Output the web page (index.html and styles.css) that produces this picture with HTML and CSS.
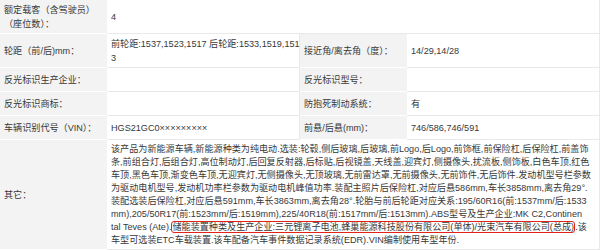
FILE: index.html
```html
<!DOCTYPE html>
<html lang="zh-CN">
<head>
<meta charset="utf-8">
<title>车辆参数</title>
<link rel="stylesheet" href="styles.css">
</head>
<body>
<table class="spec">
  <colgroup>
    <col class="col-label">
    <col class="col-value">
    <col class="col-label">
    <col class="col-value">
  </colgroup>
  <tr class="row-two">
    <th>额定载客（含驾驶员）（座位数）：</th>
    <td colspan="3">4</td>
  </tr>
  <tr class="row-two">
    <th>轮距（前/后)mm：</th>
    <td class="fixed-lines">前轮距:1537,1523,1517 后轮距:1533,1519,151<br>3</td>
    <th>接近角/离去角（度）：</th>
    <td>14/29,14/28</td>
  </tr>
  <tr class="row-one">
    <th>反光标识生产企业：</th>
    <td></td>
    <th>反光标识型号：</th>
    <td></td>
  </tr>
  <tr class="row-one">
    <th>反光标识商标：</th>
    <td></td>
    <th>防抱死制动系统：</th>
    <td>有</td>
  </tr>
  <tr class="row-one">
    <th>车辆识别代号（VIN）：</th>
    <td>HGS21GC0×××××××××</td>
    <th>前悬/后悬(mm)：</th>
    <td>746/586,746/591</td>
  </tr>
  <tr>
    <th>其它：</th>
    <td colspan="3" class="notes fixed-lines">该产品为新能源车辆,新能源种类为纯电动.选装:轮毂,侧后玻璃,后玻璃,前Logo,后Logo,前饰框,前保险杠,后保险杠,前盖饰<br>条,前组合灯,后组合灯,高位制动灯,后回复反射器,后标贴,后视镜盖,天线盖,迎宾灯,侧摄像头,扰流板,侧饰板,白色车顶,红色<br>车顶,黑色车顶,渐变色车顶,无迎宾灯,无侧摄像头,无顶玻璃,无前雷达罩,无前摄像头,无前饰件,无后饰件.发动机型号栏参数<br>为驱动电机型号,发动机功率栏参数为驱动电机峰值功率.装配主照片后保险杠,对应后悬586mm,车长3858mm,离去角29°.<br>装配选装后保险杠,对应后悬591mm,车长3863mm,离去角28°.轮胎与前后轮距对应关系:195/60R16(前:1537mm/后:1533<br>mm),205/50R17(前:1523mm/后:1519mm),225/40R18(前:1517mm/后:1513mm).ABS型号及生产企业:MK C2,Continen<br>tal Teves (Ate).<span class="highlight">储能装置种类及生产企业:三元锂离子电池,蜂巢能源科技股份有限公司(单体)/光束汽车有限公司(总成)</span>.该<br>车型可选装ETC车载装置.该车配备汽车事件数据记录系统(EDR).VIN编制使用车型年份.</td>
  </tr>
</table>
</body>
</html>
```

FILE: styles.css
```css
* {
  box-sizing: border-box;
}

body {
  margin: 0;
  background: #fff;
  color: #383838;
  font-family: "Liberation Sans", "Noto Sans CJK SC", sans-serif;
  font-size: 9.1px;
}

.spec {
  width: 600px;
  table-layout: fixed;
  border-collapse: separate;
  border-spacing: 0;
}

.col-label {
  width: 107px;
}

.col-value {
  width: 193px;
}

.spec th,
.spec td {
  line-height: 14px;
  padding: 3px 2px 2px 4px;
  vertical-align: middle;
  text-align: left;
}

.spec th {
  font-weight: normal;
  background: #f3f3f3;
  border-bottom: 1px solid #fff;
}

.spec td {
  word-break: break-all;
  border-bottom: 1px solid #e9e9e9;
  border-right: 1px solid #e9e9e9;
}

.row-one {
  height: 24px;
}

.spec .fixed-lines {
  white-space: nowrap;
}

.spec .notes {
  line-height: 13px;
  padding-top: 3px;
}

.highlight {
  border: 1.5px solid #e2231a;
  border-radius: 3px;
}
```
